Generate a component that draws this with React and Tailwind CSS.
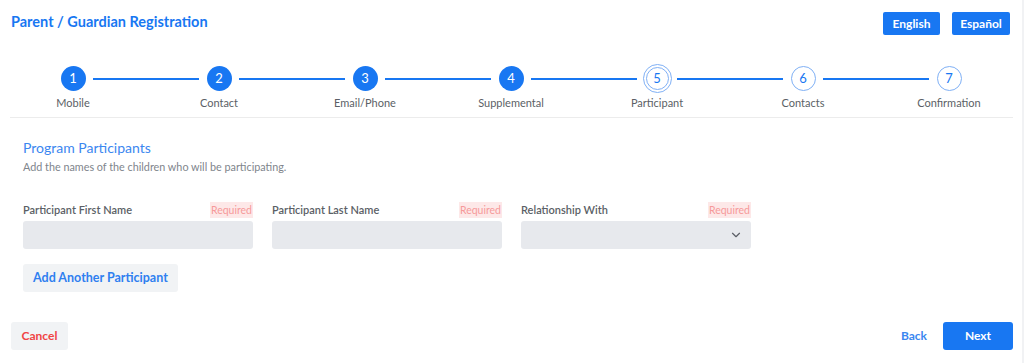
import { ChevronDown } from 'lucide-react';

const steps = ['Mobile', 'Contact', 'Email/Phone', 'Supplemental', 'Participant', 'Contacts', 'Confirmation'];
const current = 5;

function StepCircle({ n }) {
  if (n < current) {
    return (
      <div className="flex h-[25px] w-[25px] items-center justify-center rounded-full bg-[#1877f2] text-[13px] text-white">
        {n}
      </div>
    );
  }
  if (n === current) {
    return (
      <div className="flex h-[29px] w-[29px] items-center justify-center rounded-full border border-[#7fb0f5] bg-white">
        <div className="flex h-[23px] w-[23px] items-center justify-center rounded-full border border-[#7fb0f5] text-[13px] text-[#1877f2]">
          {n}
        </div>
      </div>
    );
  }
  return (
    <div className="flex h-[25px] w-[25px] items-center justify-center rounded-full border border-[#7fb0f5] bg-white text-[13px] text-[#1877f2]">
      {n}
    </div>
  );
}

function Field({ label, select }) {
  return (
    <div className="w-[230px]">
      <div className="flex h-[16px] items-center justify-between">
        <span className="text-[11px] font-semibold text-[#5b5f66]">{label}</span>
        <span className="bg-[#fde8e8] px-[1px] text-[10.5px] leading-[16px] text-[#f69a9a]">Required</span>
      </div>
      <div className="mt-[3px] flex h-[28px] items-center justify-end rounded-[3px] bg-[#e7e9ed] pr-[8px]">
        {select && <ChevronDown size={14} strokeWidth={2} className="text-[#5b5f66]" />}
      </div>
    </div>
  );
}

export default function App() {
  return (
    <div className="min-h-[363px] bg-[#f1f2f4] font-['Lato',sans-serif]">
      <div className="mr-[2px] min-h-[363px] bg-white">
        <div className="flex items-start justify-between px-[10px] pt-[12px]">
          <h1 className="pl-[1px] text-[14.5px] font-bold leading-[20px] text-[#1877f2]">Parent / Guardian Registration</h1>
          <div className="flex gap-[12px] pr-[2px]">
            <button className="h-[23px] w-[57px] rounded-[2px] bg-[#1877f2] text-[12px] font-bold text-white">English</button>
            <button className="h-[23px] w-[58px] rounded-[2px] bg-[#1877f2] text-[12px] font-bold text-white">Español</button>
          </div>
        </div>

        <div className="mt-[31px] grid grid-cols-7">
          {steps.map((s, i) => (
            <div key={s} className="relative flex flex-col items-center">
              {i < steps.length - 1 && (
                <div className="absolute left-[calc(50%+20px)] right-[calc(-50%+20px)] top-[12px] h-[1.5px] bg-[#1877f2]" />
              )}
              <div className="flex h-[25px] items-center">
                <StepCircle n={i + 1} />
              </div>
              <span className="mt-[4px] text-[11px] leading-[16px] text-[#5b5f66]">{s}</span>
            </div>
          ))}
        </div>

        <div className="ml-[10px] mr-[9px] mt-[6px] h-px bg-[#ececec]" />

        <div className="px-[23px]">
          <h2 className="mt-[20px] text-[14px] leading-[20px] text-[#3b87f0]">Program Participants</h2>
          <p className="mt-[1px] text-[10.8px] leading-[16px] text-[#80858c]">Add the names of the children who will be participating.</p>

          <div className="mt-[27px] flex gap-[19px]">
            <Field label="Participant First Name" />
            <Field label="Participant Last Name" />
            <Field label="Relationship With" select />
          </div>

          <button className="mt-[15px] h-[28px] rounded-[3px] bg-[#f1f3f5] px-[10px] text-[12.5px] font-bold text-[#2f7ff0]">
            Add Another Participant
          </button>
        </div>

        <div className="mt-[30px] flex items-center justify-between pl-[11px] pr-[9px]">
          <button className="h-[28px] w-[57px] rounded-[3px] bg-[#f1f3f5] text-[12px] font-bold text-[#f04444]">Cancel</button>
          <div className="flex items-center gap-[16px]">
            <button className="text-[12px] font-bold text-[#3b87f0]">Back</button>
            <button className="h-[28px] w-[70px] rounded-[3px] bg-[#1877f2] text-[12px] font-bold text-white">Next</button>
          </div>
        </div>
      </div>
    </div>
  );
}
